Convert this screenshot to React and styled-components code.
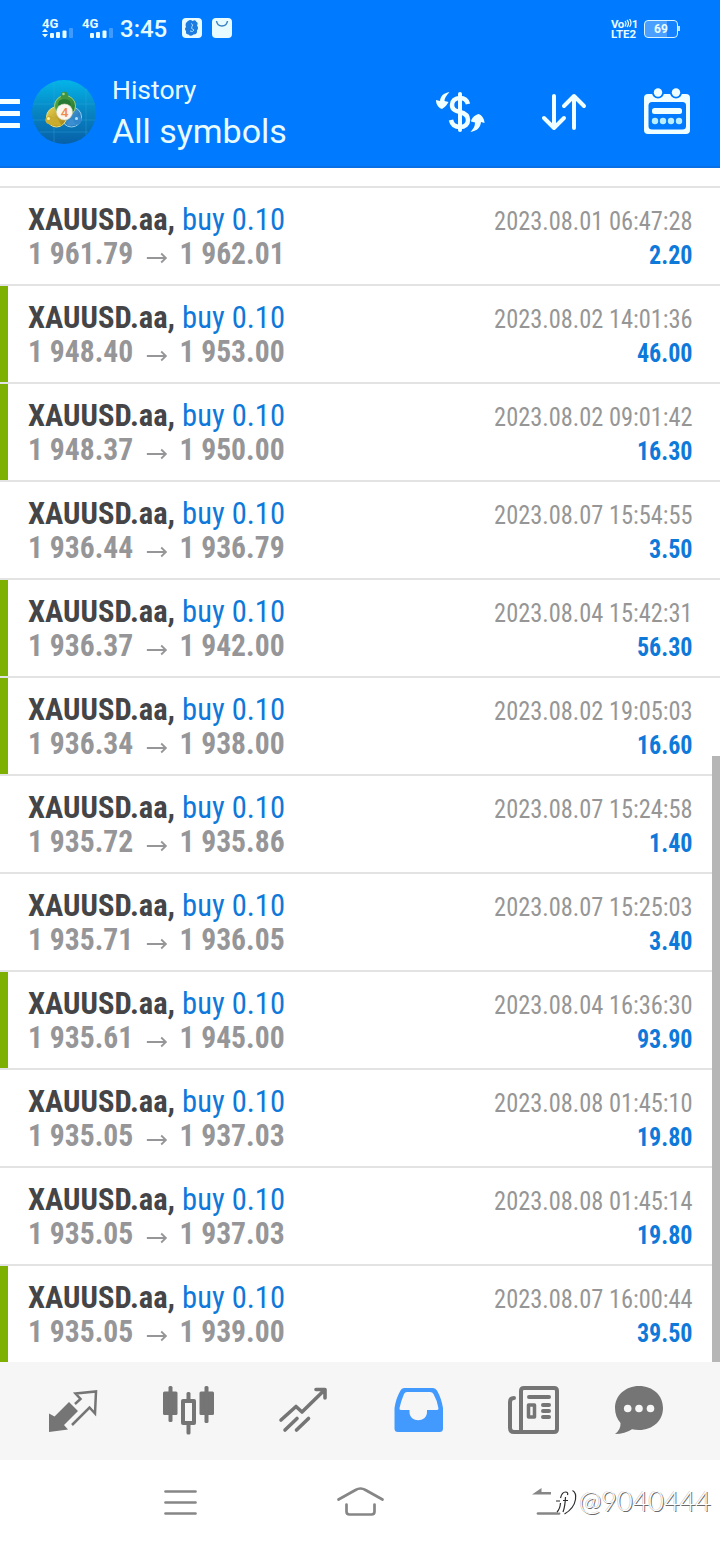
import React from "react";
import styled, { createGlobalStyle } from "styled-components";

const GlobalStyle = createGlobalStyle`
  body {
    margin: 0;
    background: #ffffff;
    font-family: Roboto, "Liberation Sans", sans-serif;
  }

  svg {
    display: block;
    flex: none;
  }
`;

const Screen = styled.div`
  position: relative;
  width: 720px;
  height: 1544px;
  display: flex;
  flex-direction: column;
  overflow: hidden;
  background: #ffffff;
`;

const StatusBar = styled.div`
  display: flex;
  align-items: flex-start;
  height: 56px;
  padding: 18px 42px 0 42px;
  box-sizing: border-box;
  background: #007aff;
  color: #e8fcff;
`;

const Signal = styled.div`
  width: ${(props) => props.$width}px;
`;

const Network = styled.div`
  height: 10px;
  font-size: 13px;
  line-height: 11px;
  font-weight: 700;
`;

const Clock = styled.div`
  width: 61px;
  font-size: 24px;
  line-height: 22px;
  font-weight: 500;
`;

const Spacer = styled.div`
  flex: 1 1 auto;
`;

const Volte = styled.div`
  width: 33px;
  padding-top: 1px;
  font-size: 11.5px;
  line-height: 10px;
  font-weight: 700;
  white-space: nowrap;
`;

const VolteTop = styled.div`
  display: flex;
  height: 10px;
  letter-spacing: -0.5px;
`;

const Battery = styled.div`
  position: relative;
  width: 34px;
  height: 18px;
  margin-top: 2px;
  box-sizing: border-box;
  border: 1.5px solid #d9f4ff;
  border-radius: 4px;
  background: linear-gradient(90deg, #4b9fff 69%, #1681ff 69%);
  font-size: 12px;
  line-height: 16px;
  font-weight: 700;
  text-align: center;

  &::after {
    content: "";
    position: absolute;
    right: -3px;
    top: 5px;
    width: 2px;
    height: 5px;
    background: #b9e2ff;
  }
`;

const Header = styled.header`
  display: flex;
  height: 112px;
  box-sizing: border-box;
  border-bottom: 2px solid #0870e6;
  background: #007aff;
  color: #e8fcff;
`;

const Titles = styled.div`
  flex: 1 1 auto;
  padding-top: 17px;
`;

const Subtitle = styled.div`
  font-size: 26.5px;
  line-height: 34px;
`;

const Title = styled.div`
  font-size: 34px;
  line-height: 48px;
`;

const DealList = styled.main`
  position: relative;
  height: 1194px;
  padding-top: 18px;
  box-sizing: border-box;
`;

const Scrollbar = styled.div`
  position: absolute;
  right: 0;
  top: 588px;
  bottom: 0;
  width: 8px;
  background: #b6b6b6;
`;

const DealRow = styled.div`
  display: flex;
  justify-content: space-between;
  height: 98px;
  box-sizing: border-box;
  border-top: 2px solid #e2e3e2;
`;

const Marker = styled.div`
  width: 8px;
  background: ${(props) => (props.$closed ? "#7db000" : "transparent")};
`;

const Deal = styled.div`
  flex: 1 1 auto;
  padding: 14px 0 0 20px;
  font-size: 32px;
  line-height: 34px;
  font-stretch: 75%;
  white-space: nowrap;
`;

const Order = styled.div`
  transform: scaleX(0.955);
  transform-origin: left;
`;

const Symbol = styled.span`
  color: #454547;
  font-weight: 700;
`;

const Volume = styled.span`
  color: #0f79da;
`;

const Prices = styled.div`
  display: flex;
  align-items: center;
  color: #969698;
  font-weight: 700;
  transform: scaleX(0.925);
  transform-origin: left;
`;

const Result = styled.div`
  padding: 16px 27px 0 0;
  font-size: 26px;
  line-height: 34px;
  font-stretch: 75%;
  text-align: right;
  white-space: nowrap;
`;

const Time = styled.div`
  color: #969696;
  transform: scaleX(0.938);
  transform-origin: right;
`;

const Profit = styled.div`
  color: #0f79da;
  font-weight: 700;
  transform: scaleX(0.925);
  transform-origin: right;
`;

const TabBar = styled.nav`
  display: flex;
  height: 98px;
  padding-left: 16px;
  background: #f6f6f6;
`;

const SystemNav = styled.nav`
  position: relative;
  display: flex;
  justify-content: space-between;
  height: 84px;
  padding: 0 90px;
`;

const Watermark = styled.div`
  position: absolute;
  left: 555px;
  top: 24px;
  display: flex;
  align-items: center;
  font-family: Lato, "Open Sans", sans-serif;
  font-size: 27px;
  line-height: 34px;
  font-weight: 300;
  color: #ffffff;
  text-shadow: 1px 1px 0 #6a6a6a, -0.5px -0.5px 0 #bbbbbb;
`;

const deals = [
  { open: "1 961.79", close: "1 962.01", time: "2023.08.01 06:47:28", profit: "2.20" },
  { open: "1 948.40", close: "1 953.00", time: "2023.08.02 14:01:36", profit: "46.00", closed: true },
  { open: "1 948.37", close: "1 950.00", time: "2023.08.02 09:01:42", profit: "16.30", closed: true },
  { open: "1 936.44", close: "1 936.79", time: "2023.08.07 15:54:55", profit: "3.50" },
  { open: "1 936.37", close: "1 942.00", time: "2023.08.04 15:42:31", profit: "56.30", closed: true },
  { open: "1 936.34", close: "1 938.00", time: "2023.08.02 19:05:03", profit: "16.60", closed: true },
  { open: "1 935.72", close: "1 935.86", time: "2023.08.07 15:24:58", profit: "1.40" },
  { open: "1 935.71", close: "1 936.05", time: "2023.08.07 15:25:03", profit: "3.40" },
  { open: "1 935.61", close: "1 945.00", time: "2023.08.04 16:36:30", profit: "93.90", closed: true },
  { open: "1 935.05", close: "1 937.03", time: "2023.08.08 01:45:10", profit: "19.80" },
  { open: "1 935.05", close: "1 937.03", time: "2023.08.08 01:45:14", profit: "19.80" },
  { open: "1 935.05", close: "1 939.00", time: "2023.08.07 16:00:44", profit: "39.50", closed: true },
];

const SignalBars = ({ arrows }) => (
  <svg width="32" height="10" viewBox="0 0 32 10" fill="#e8fcff">
    {arrows && <path d="M0 4 3 0.5 6 4ZM0 6 3 9.5 6 6Z" />}
    <rect x="8" y="5" width="4" height="5" rx="1" />
    <rect x="14" y="4" width="4" height="6" rx="1" />
    <rect x="20.500" y="2.500" width="4" height="7.500" rx="1" />
    <rect x="27" y="0" width="4" height="10" rx="1" fill="#3f9bff" />
  </svg>
);

const StatusIcons = () => (
  <svg width="52" height="22" viewBox="181 18 52 22">
    <rect x="182" y="18" width="20" height="20" rx="4" fill="#e8fcff" />
    <path
      d="M188 21q2.500-2 4.500 0 3-2 4 1 2 1 .500 3.500 2 2.500 0 5 .500 4-3.500 4-3 2.500-5 0-3 0-2.500-3.500-2-2 0-4-1.500-4 2-6Z"
      fill="#1c7ce0"
    />
    <path d="M191 23.500q3 1 1 3t2 3.500q-1 2.500-4 1" fill="none" stroke="#a9dcff" strokeWidth="1" />
    <rect x="212" y="18" width="20" height="20" rx="4" fill="#e8fcff" />
    <path d="M216.500 21c1 6.500 10 6.500 11 0" fill="none" stroke="#3b83c4" strokeWidth="1.500" />
  </svg>
);

const MenuIcon = () => (
  <svg width="32" height="110" viewBox="0 56 32 110" fill="#f4ffff">
    <rect x="-2" y="99" width="22" height="5" rx="0.500" />
    <rect x="-2" y="111" width="22" height="5" rx="0.500" />
    <rect x="-2" y="123" width="22" height="5" rx="0.500" />
  </svg>
);

const AppLogo = () => (
  <svg width="80" height="110" viewBox="32 56 80 110">
    <defs>
      <linearGradient id="disc" x1="0" y1="0" x2="0" y2="1">
        <stop offset="0" stopColor="#04b4e8" />
        <stop offset="0.5" stopColor="#0784c2" />
        <stop offset="1" stopColor="#0760a8" />
      </linearGradient>
      <linearGradient id="green" x1="0" y1="0" x2="1" y2="1">
        <stop offset="0" stopColor="#5fae45" />
        <stop offset="1" stopColor="#1b7030" />
      </linearGradient>
      <linearGradient id="yellow" x1="0" y1="0" x2="1" y2="1">
        <stop offset="0" stopColor="#ead54f" />
        <stop offset="1" stopColor="#9c7a16" />
      </linearGradient>
      <linearGradient id="blue" x1="0" y1="0" x2="1" y2="1">
        <stop offset="0" stopColor="#5fb2e6" />
        <stop offset="1" stopColor="#1460a8" />
      </linearGradient>
    </defs>
    <circle cx="64" cy="112" r="32" fill="url(#disc)" />
    <path
      d="M54 82v60M86 89v46M33 104h62M33 120h62M40 132h48"
      fill="none"
      stroke="#39a9dc"
      strokeOpacity="0.45"
      strokeWidth="0.800"
    />
    <circle cx="71.500" cy="117" r="10" fill="url(#blue)" stroke="#8fd0f2" strokeWidth="1" />
    <circle cx="56.500" cy="117" r="10" fill="url(#yellow)" stroke="#eadf7c" strokeWidth="1" />
    <circle cx="65" cy="106" r="10.500" fill="url(#green)" stroke="#a2d07c" strokeWidth="1" />
    <path d="M58 105q0-6 6.500-6t6.500 6Z" fill="#247a35" />
    <circle cx="64.500" cy="95.500" r="3.800" fill="#3f9440" />
    <circle cx="63.500" cy="94" r="1.300" fill="#9bd58b" />
    <path d="M50 125q0-6 7-7l5 8Z" fill="#c9ac2c" />
    <circle cx="49.500" cy="120" r="4.200" fill="#c7ae33" />
    <circle cx="48.500" cy="118.500" r="1.500" fill="#fff2a0" />
    <path d="M67 126q1-6 6-7l5 6Z" fill="#3b8fd0" />
    <circle cx="77.500" cy="120" r="4.200" fill="#3286cb" />
    <circle cx="76.500" cy="118.500" r="1.500" fill="#b2e4ff" />
    <circle cx="64.500" cy="112" r="8" fill="#fbf6ee" stroke="#d9d6b8" strokeWidth="0.600" />
    <text x="64.500" y="117" fontSize="13.500" fontWeight="500" textAnchor="middle" fill="#ef8a4e">
      4
    </text>
  </svg>
);

const DollarIcon = () => (
  <svg width="104" height="110" viewBox="408 56 104 110" fill="none" stroke="#f0ffff">
    <path d="M460 94v36" strokeWidth="4" strokeLinecap="round" />
    <path
      d="M468 104c-1-4-4-6-8-6-5 0-8 3-8 7 0 5 4 6 8 7s8 3 8 8c0 4-3 7-8 7-5 0-8-2-9-7"
      strokeWidth="4.500"
    />
    <path d="M449.500 92c-6 1-9 4-9.500 9l-4-1c0 5 3 8 6 9 3-2 5-4 6.500-7l-4-1c0-3 1.500-5 5-9Z" fill="#f0ffff" stroke="none" />
    <path d="M470.500 132c6-1 10-4 10.500-10l3.500 1c0-4-2.500-8-6-9-4 1-7 4.500-7.500 7.500l4 1c0 4-1.500 6-4.500 9.500Z" fill="#f0ffff" stroke="none" />
  </svg>
);

const SortIcon = () => (
  <svg
    width="104"
    height="110"
    viewBox="512 56 104 110"
    fill="none"
    stroke="#f0ffff"
    strokeWidth="4"
    strokeLinecap="round"
    strokeLinejoin="round"
  >
    <path d="M554 96v32M544 118l10 10 10-10M574 128V96M564 106l10-10 10 10" />
  </svg>
);

const CalendarIcon = () => (
  <svg width="104" height="110" viewBox="616 56 104 110">
    <rect x="644" y="94" width="46" height="40" rx="4" fill="#f0ffff" />
    <rect x="648.500" y="102" width="37.500" height="27.500" rx="3.500" fill="#007aff" />
    <circle cx="658" cy="92.500" r="6" fill="#007aff" />
    <circle cx="676" cy="92.500" r="6" fill="#007aff" />
    <circle cx="658" cy="92.500" r="4.200" fill="#f0ffff" />
    <circle cx="676" cy="92.500" r="4.200" fill="#f0ffff" />
    <rect x="652" y="108" width="30" height="6" rx="2.500" fill="#f0ffff" />
    <g fill="#b9eeff">
      <circle cx="655" cy="121" r="3.200" />
      <circle cx="663" cy="121" r="3.200" />
      <circle cx="671" cy="121" r="3.200" />
      <circle cx="679" cy="121" r="3.200" />
    </g>
  </svg>
);

const QuotesIcon = () => (
  <svg width="115" height="98" viewBox="16 1362 115 98">
    <path d="M49 1413.500v18.500l19-2.500-4-4.500 14-14-9-9-14.500 14.500Z" fill="#757575" />
    <path
      d="M75 1404l5.500-5-5-5.500L96 1391.500l-1 22-5.500-6L72 1425"
      fill="none"
      stroke="#757575"
      strokeWidth="2.500"
    />
  </svg>
);

const ChartIcon = () => (
  <svg width="115" height="98" viewBox="131 1362 115 98" fill="#757575">
    <rect x="163" y="1391.500" width="14.500" height="23.500" rx="1.500" />
    <rect x="168.500" y="1386" width="4" height="36" rx="1.500" />
    <rect x="199.500" y="1391.500" width="14.500" height="23.500" rx="1.500" />
    <rect x="204.500" y="1386" width="4" height="37" rx="1.500" />
    <rect x="186.500" y="1392" width="4" height="42.500" rx="1.500" />
    <rect x="183" y="1401" width="11" height="22" fill="#f6f6f6" stroke="#757575" strokeWidth="4" strokeLinejoin="round" />
  </svg>
);

const TradeIcon = () => (
  <svg
    width="115"
    height="98"
    viewBox="246 1362 115 98"
    fill="none"
    stroke="#757575"
    strokeWidth="3.600"
    strokeLinecap="round"
    strokeLinejoin="round"
  >
    <path d="M281 1420l15-13.500 6 5.500 22.500-22M316 1389.500h9v8.500M285 1430l12-11.500M296.500 1430l12-11.500" />
  </svg>
);

const HistoryIcon = () => (
  <svg width="115" height="98" viewBox="361 1362 115 98">
    <path
      d="M404 1388h29q2.500 0 4 2.500 4.500 8 6 17.500v20.500q0 3.500-3.500 3.500h-41.500q-3.500 0-3.500-3.500V1408q1.500-10 6-17.500 1-2.500 3.500-2.500Z"
      fill="#429aff"
    />
    <path
      d="M407 1392h23q2.500 0 3.500 2 4 7 5 14.500 0 1.500-2 1.500H427v2c0 11-17.500 11-17.500 0v-2H401q-2 0-1.500-2 1.500-7 4.500-14 .800-2 3-2Z"
      fill="#f6f6f6"
    />
  </svg>
);

const NewsIcon = () => (
  <svg
    width="115"
    height="98"
    viewBox="476 1362 115 98"
    fill="none"
    stroke="#757575"
    strokeWidth="4"
    strokeLinecap="round"
    strokeLinejoin="round"
  >
    <path d="M514 1398q-4 0-4 4v26q0 4 4 4h40q3 0 3-3v-38q0-3-3-3h-30q-3 0-3 3v40" />
    <path d="M529 1397h20M543 1405h6M543 1411h6M543 1417h6" />
    <rect x="528.500" y="1405" width="6" height="12" strokeWidth="3.500" />
  </svg>
);

const ChatIcon = () => (
  <svg width="113" height="98" viewBox="591 1362 113 98">
    <path
      d="M639 1386c14 0 24 9.500 24 22s-10 22-24 22q-4 0-7-.800-7 4.800-17 4.800 6-4.500 5.500-11c-3.500-4-5.500-9-5.500-15 0-12.500 10.500-22 24-22Z"
      fill="#757575"
    />
    <g fill="#f6f6f6">
      <circle cx="627.700" cy="1408.500" r="3.800" />
      <circle cx="639" cy="1408.500" r="3.800" />
      <circle cx="650.500" cy="1408.500" r="3.800" />
    </g>
  </svg>
);

const NavIcon = ({ x, children }) => (
  <svg
    width="180"
    height="84"
    viewBox={`${x} 1460 180 84`}
    fill="none"
    stroke="#868686"
    strokeWidth="2.700"
    strokeLinecap="round"
    strokeLinejoin="round"
  >
    {children}
  </svg>
);

const WatermarkLogo = () => (
  <svg width="24" height="34" viewBox="555 1485 24 34" fill="none">
    <path d="M558 1513q3-3 4-10l1-5q1-5 5-5M557 1502h10" stroke="#ffffff" strokeWidth="2.500" />
    <path d="M571 1492q5 3 4 10-1 8-11 13" stroke="#ffffff" strokeWidth="2" />
    <path
      d="M557 1513q3-3 3.500-9M560.500 1499q1.500-6 5-6 3 0 2 3M563 1513q2-5 2.500-15M556 1502h4M563 1501.500h5M572.500 1491.500q4 2 3 9-1.500 9-11 14.500"
      stroke="#2e2e2e"
      strokeWidth="1.200"
    />
  </svg>
);

const App = () => {
  return (
    <Screen>
      <GlobalStyle />
      <StatusBar>
        <Signal $width={40}>
          <Network>4G</Network>
          <SignalBars arrows />
        </Signal>
        <Signal $width={38}>
          <Network>4G</Network>
          <SignalBars />
        </Signal>
        <Clock>3:45</Clock>
        <StatusIcons />
        <Spacer />
        <Volte>
          <VolteTop>
            Vo
            <svg width="8" height="9" viewBox="0 0 8 9" fill="none" stroke="#e8fcff" strokeWidth="1.200">
              <path d="M1 2q2 2.500 0 5.500M3 1q3 3.500 0 7M5.500 0q3 4 0 8" />
            </svg>
            1
          </VolteTop>
          LTE2
        </Volte>
        <Battery>69</Battery>
      </StatusBar>

      <Header>
        <MenuIcon />
        <AppLogo />
        <Titles>
          <Subtitle>History</Subtitle>
          <Title>All symbols</Title>
        </Titles>
        <DollarIcon />
        <SortIcon />
        <CalendarIcon />
      </Header>

      <DealList>
        {deals.map((deal) => (
          <DealRow key={deal.time}>
            <Marker $closed={deal.closed} />
            <Deal>
              <Order>
                <Symbol>XAUUSD.aa,</Symbol> <Volume>buy 0.10</Volume>
              </Order>
              <Prices>
                {deal.open}
                <svg width="50" height="34" viewBox="0 0 50 34" fill="none" stroke="#969698" strokeWidth="2">
                  <path d="M14.500 22h20M30 17.500l5 4.500-5 4.500" />
                </svg>
                {deal.close}
              </Prices>
            </Deal>
            <Result>
              <Time>{deal.time}</Time>
              <Profit>{deal.profit}</Profit>
            </Result>
          </DealRow>
        ))}
        <Scrollbar />
      </DealList>

      <TabBar>
        <QuotesIcon />
        <ChartIcon />
        <TradeIcon />
        <HistoryIcon />
        <NewsIcon />
        <ChatIcon />
      </TabBar>

      <SystemNav>
        <NavIcon x={90}>
          <path d="M165.500 1491.500h30M165.500 1502.500h30M165.500 1513.500h30" />
        </NavIcon>
        <NavIcon x={270}>
          <path d="M338.500 1499.500l17-9.500q5-3 10 0l17 9.500M346.500 1504.500v7q0 3 3 3h22q3 0 3-3v-7" />
        </NavIcon>
        <NavIcon x={450}>
          <path d="M532 1494.500l9.500-6.500v4h9.500v2.500Z" fill="#868686" stroke="none" />
          <path d="M538 1513.500h21" />
        </NavIcon>
        <Watermark>
          <WatermarkLogo />
          @9040444
        </Watermark>
      </SystemNav>
    </Screen>
  );
};

export default App;
